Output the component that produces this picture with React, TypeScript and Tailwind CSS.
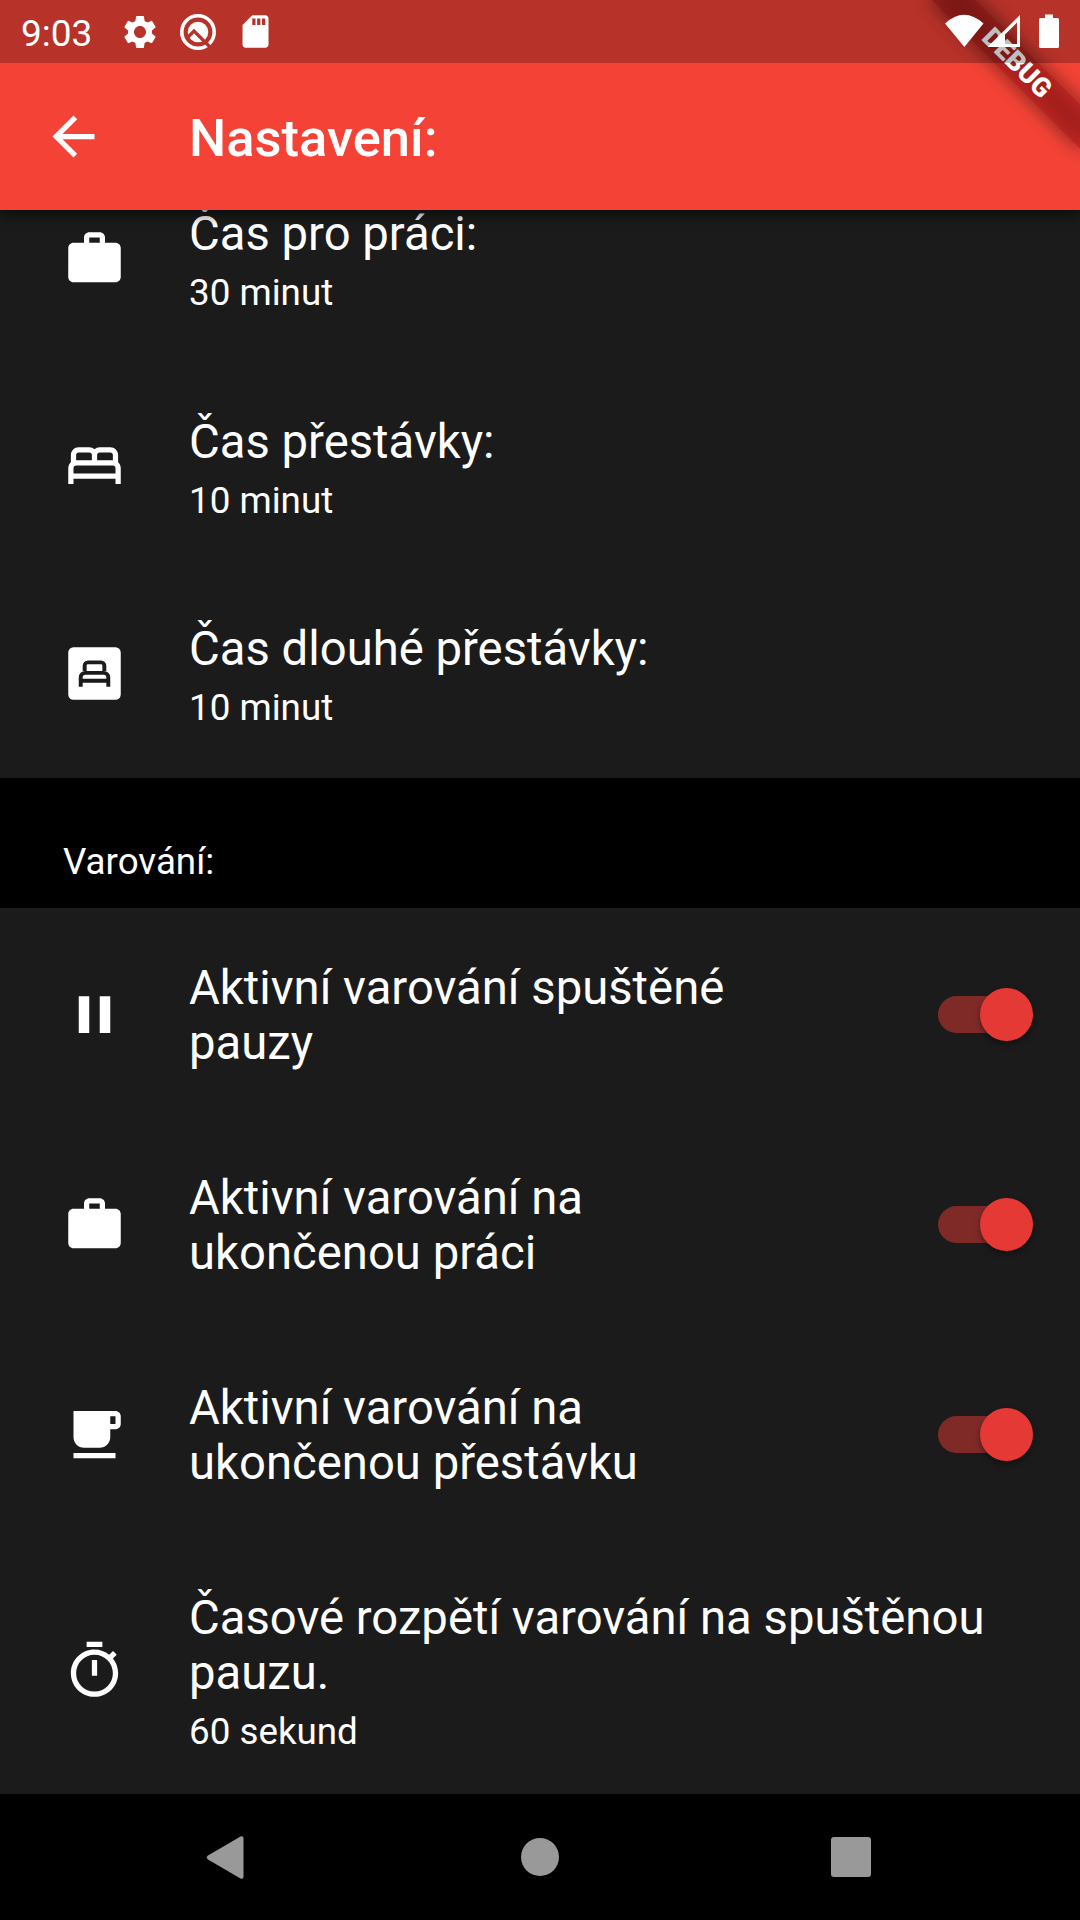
import React from "react";

const WORK =
  "M20 6h-4V4c0-1.11-.89-2-2-2h-4c-1.11 0-2 .89-2 2v2H4c-1.11 0-1.99.89-1.99 2L2 19c0 1.11.89 2 2 2h16c1.11 0 2-.89 2-2V8c0-1.11-.89-2-2-2zm-6 0h-4V4h4v2z";
const BED =
  "M21 10.78V8c0-1.65-1.35-3-3-3h-4c-.77 0-1.47.3-2 .78-.53-.48-1.23-.78-2-.78H6C4.35 5 3 6.35 3 8v2.78c-.61.55-1 1.34-1 2.22v6h2v-2h16v2h2v-6c0-.88-.39-1.67-1-2.22zM14 7h4c.55 0 1 .45 1 1v2h-6V8c0-.55.45-1 1-1zM5 8c0-.55.45-1 1-1h4c.55 0 1 .45 1 1v2H5V8zm-1 7v-2c0-.55.45-1 1-1h14c.55 0 1 .45 1 1v2H4z";
const PAUSE = "M6 19h4V5H6v14zm8-14v14h4V5h-4z";
const CUP =
  "M20 3H4v10c0 2.21 1.79 4 4 4h6c2.21 0 4-1.79 4-4v-3h2c1.11 0 2-.9 2-2V5c0-1.11-.89-2-2-2zm0 5h-2V5h2v3zM4 19h16v2H4z";
const TIMER =
  "M15 1H9v2h6V1zm-4 13h2V8h-2v6zm8.03-6.61l1.42-1.42c-.43-.51-.9-.99-1.41-1.41l-1.42 1.42C16.07 4.74 14.12 4 12 4c-4.97 0-9 4.03-9 9s4.02 9 9 9 9-4.03 9-9c0-2.12-.74-4.07-1.97-5.61zM12 20c-3.87 0-7-3.13-7-7s3.13-7 7-7 7 3.13 7 7-3.13 7-7 7z";
const BACK = "M20 11H7.83l5.59-5.59L12 4l-8 8 8 8 1.41-1.41L7.83 13H20v-2z";
const GEAR =
  "M19.14 12.94c.04-.3.06-.61.06-.94 0-.32-.02-.64-.07-.94l2.03-1.58c.18-.14.23-.41.12-.61l-1.92-3.32c-.12-.22-.37-.29-.59-.22l-2.39.96c-.5-.38-1.03-.7-1.62-.94l-.36-2.54c-.04-.24-.24-.41-.48-.41h-3.84c-.24 0-.43.17-.47.41l-.36 2.54c-.59.24-1.13.57-1.62.94l-2.39-.96c-.22-.08-.47 0-.59.22L2.74 8.87c-.12.21-.08.47.12.61l2.03 1.58c-.05.3-.09.63-.09.94s.02.64.07.94l-2.03 1.58c-.18.14-.23.41-.12.61l1.92 3.32c.12.22.37.29.59.22l2.39-.96c.5.38 1.03.7 1.62.94l.36 2.54c.05.24.24.41.48.41h3.84c.24 0 .44-.17.47-.41l.36-2.54c.59-.24 1.13-.56 1.62-.94l2.39.96c.22.08.47 0 .59-.22l1.92-3.32c.12-.22.07-.47-.12-.61l-2.01-1.58zM12 15.6c-1.98 0-3.6-1.62-3.6-3.6s1.62-3.6 3.6-3.6 3.6 1.62 3.6 3.6-1.62 3.6-3.6 3.6z";
const SD =
  "M18 2h-8L4.02 8 4 20c0 1.1.9 2 2 2h12c1.1 0 2-.9 2-2V4c0-1.1-.9-2-2-2zm-6 6h-2V4h2v4zm3 0h-2V4h2v4zm3 0h-2V4h2v4z";

function Icon({ d, className = "size-[63px]" }: { d: string; className?: string }) {
  return (
    <svg viewBox="0 0 24 24" fill="currentColor" className={`${className} shrink-0`}>
      <path d={d} />
    </svg>
  );
}

function SingleBedIcon() {
  return (
    <svg viewBox="0 0 24 24" className="size-[63px] shrink-0">
      <rect x="2" y="2" width="20" height="20" rx="2" fill="white" />
      <g fill="none" stroke="#1b1b1b" strokeWidth="1.5">
        <path d="M8.25 11V9A1.25 1.25 0 0 1 9.5 7.75h5A1.25 1.25 0 0 1 15.75 9v2" />
        <path d="M6.75 17v-3.5A1.75 1.75 0 0 1 8.5 11.75h7a1.75 1.75 0 0 1 1.75 1.75V17M6.75 14.75h10.5" />
      </g>
    </svg>
  );
}

function Toggle() {
  return (
    <div className="relative mr-[47px] h-[53px] w-[95px] shrink-0">
      <div className="mt-[8px] h-[37px] w-[87px] rounded-full bg-[#802a28]" />
      <div className="absolute top-0 right-0 size-[53px] rounded-full bg-[#e53935] shadow-[0_3px_6px_rgba(0,0,0,0.4)]" />
    </div>
  );
}

function Row({
  icon,
  title,
  subtitle,
  toggle,
  className,
  textClass = "pt-[4px]",
}: {
  icon: React.ReactNode;
  title: React.ReactNode;
  subtitle?: string;
  toggle?: boolean;
  className: string;
  textClass?: string;
}) {
  return (
    <div className={`flex shrink-0 items-center bg-[#1b1b1b] pl-[63px] ${className}`}>
      {icon}
      <div className={`ml-[63px] flex-1 whitespace-nowrap ${textClass}`}>
        <div className="text-[47.25px] leading-[55px]">{title}</div>
        {subtitle && <div className="mt-[9px] text-[36.75px] leading-[43px]">{subtitle}</div>}
      </div>
      {toggle && <Toggle />}
    </div>
  );
}

const TIME_ROW = "h-[207.5px] pb-[2px]";
const SWITCH_ROW = "h-[210px] pt-[2px]";

export default function App() {
  return (
    <div className="relative flex h-[1920px] w-[1080px] flex-col overflow-hidden bg-black font-['Roboto',sans-serif] text-white">
      <header className="relative z-10 shrink-0 bg-[#f44336] shadow-[0_6px_12px_rgba(0,0,0,0.5)]">
        <div className="relative z-20 flex h-[63px] items-center bg-black/25 pl-[21px]">
          <span className="w-[74px] pt-[3px] text-[37px] leading-none">9:03</span>
          <Icon d={GEAR} className="ml-[25px] size-[40px]" />
          <svg viewBox="0 0 36 36" className="ml-[20px] size-[36px] shrink-0">
            <circle cx="18" cy="18" r="16.2" fill="none" stroke="white" strokeWidth="3.6" />
            <circle cx="18" cy="18" r="10.3" fill="white" />
            <path d="M7 24L14 17L31 34" fill="none" stroke="#b73229" strokeWidth="3.2" />
          </svg>
          <Icon d={SD} className="ml-[20px] size-[39px]" />
          <svg viewBox="0 0 120 40" className="ml-auto mr-[18px] h-[40px] w-[120px]" fill="white">
            <path d="M3 11.5Q22 -6 41.5 11.5L22.4 35z" />
            <path fillRule="evenodd" d="M45.5 35L78 3v32zM63 32h12V10.5L63 22.5z" />
            <path d="M103 2.5h8v3.500h4.500q1.500 0 1.500 1.500v27q0 1.500-1.500 1.500h-17q-1.500 0-1.500-1.500v-27q0-1.500 1.500-1.500h4.500z" />
          </svg>
        </div>
        <div className="flex h-[147px] items-center pl-[42px]">
          <Icon d={BACK} />
          <h1 className="ml-[84px] pt-[4px] text-[52.5px] font-medium leading-none">Nastavení:</h1>
        </div>
        <div className="absolute inset-0 z-10 overflow-hidden">
          <div className="absolute top-0 left-full size-0 origin-top-left rotate-45">
            <div className="absolute top-[73.5px] left-[-105px] h-[31.5px] w-[210px] bg-black/50 blur-[10px]" />
            <div className="absolute top-[73.5px] left-[-105px] flex h-[31.5px] w-[210px] items-center justify-center bg-[#b71c1c]/63 text-[26.8px] font-black leading-none">
              DEBUG
            </div>
          </div>
        </div>
      </header>

      <main className="flex min-h-0 flex-1 flex-col justify-end overflow-hidden">
        <Row icon={<Icon d={WORK} />} title="Čas pro práci:" subtitle="30 minut" className={TIME_ROW} textClass="pt-[5px]" />
        <Row icon={<Icon d={BED} />} title="Čas přestávky:" subtitle="10 minut" className={TIME_ROW} textClass="pt-[5px]" />
        <Row icon={<SingleBedIcon />} title="Čas dlouhé přestávky:" subtitle="10 minut" className={TIME_ROW} textClass="pt-[5px]" />
        <h2 className="flex h-[130px] shrink-0 items-end pb-[25px] pl-[63px] text-[36.75px] leading-[43px]">Varování:</h2>
        <Row icon={<Icon d={PAUSE} />} title={<>Aktivní varování spuštěné<br />pauzy</>} toggle className={SWITCH_ROW} />
        <Row icon={<Icon d={WORK} />} title={<>Aktivní varování na<br />ukončenou práci</>} toggle className={SWITCH_ROW} />
        <Row icon={<Icon d={CUP} />} title={<>Aktivní varování na<br />ukončenou přestávku</>} toggle className={SWITCH_ROW} />
        <Row icon={<Icon d={TIMER} />} title={<>Časové rozpětí varování na spuštěnou<br />pauzu.</>} subtitle="60 sekund" className="h-[256px] pt-[8px]" />
      </main>

      <nav className="flex h-[126px] shrink-0 items-center bg-black pl-[206px] text-[#999999]">
        <svg viewBox="0 0 38 43" className="h-[43px] w-[38px]" fill="currentColor">
          <path d="M34.500 .5Q37.500 -.5 37.500 2.500v38q0 3-3 2L2 23.500Q-.5 21.500 2 19.500z" />
        </svg>
        <div className="ml-[277px] size-[38px] rounded-full bg-[#999999]" />
        <div className="ml-[272px] size-[40px] rounded-[3px] bg-[#999999]" />
      </nav>
    </div>
  );
}
